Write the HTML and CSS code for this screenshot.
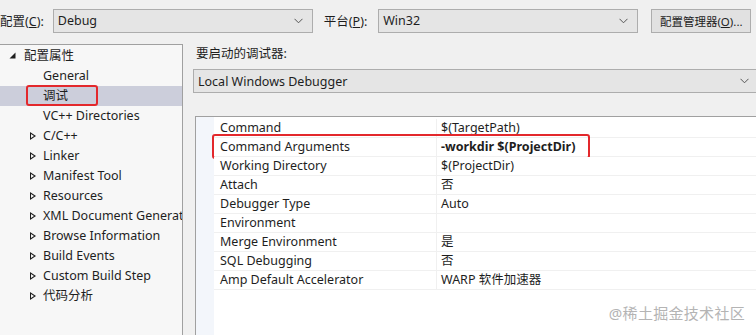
FILE: index.html
```html
<!DOCTYPE html>
<html lang="zh-CN">
<head>
    <meta charset="UTF-8">
    <title>调试 属性页</title>
    <link rel="stylesheet" href="styles.css">
</head>
<body>
    <div class="toolbar">
        <span class="label first">配置(<u>C</u>):</span>
        <div class="combo cfg">Debug<span class="chev"><svg width="9" height="6" viewBox="0 0 9 6"><path d="M0.5 0.8 L4.5 4.8 L8.5 0.8" fill="none" stroke="#555" stroke-width="1"/></svg></span></div>
        <span class="label">平台(<u>P</u>):</span>
        <div class="combo cfg">Win32<span class="chev"><svg width="9" height="6" viewBox="0 0 9 6"><path d="M0.5 0.8 L4.5 4.8 L8.5 0.8" fill="none" stroke="#555" stroke-width="1"/></svg></span></div>
        <button class="btn">配置管理器(<u>O</u>)...</button>
    </div>

    <div class="main">
        <div class="tree">
            <div class="node root"><span class="tri"><svg width="7" height="7" viewBox="0 0 7 7"><path d="M6.5 0.5 L6.5 6.5 L0.5 6.5 Z" fill="#1e1e1e"/></svg></span>配置属性</div>
            <div class="node leaf">General</div>
            <div class="node leaf selected"><span class="mark"></span>调试</div>
            <div class="node leaf">VC++ Directories</div>
            <div class="node">C/C++</div>
            <div class="node">Linker</div>
            <div class="node">Manifest Tool</div>
            <div class="node">Resources</div>
            <div class="node">XML Document Generator</div>
            <div class="node">Browse Information</div>
            <div class="node">Build Events</div>
            <div class="node">Custom Build Step</div>
            <div class="node">代码分析</div>
        </div>

        <div class="pane">
            <div class="caption">要启动的调试器:</div>
            <div class="combo wide">Local Windows Debugger<span class="chev"><svg width="9" height="6" viewBox="0 0 9 6"><path d="M0.5 0.8 L4.5 4.8 L8.5 0.8" fill="none" stroke="#555" stroke-width="1"/></svg></span></div>

            <div class="grid">
                <div class="row"><span class="name">Command</span><span class="value">$(TargetPath)</span></div>
                <div class="row"><span class="mark"></span><span class="name">Command Arguments</span><span class="value bold">-workdir $(ProjectDir)</span></div>
                <div class="row"><span class="name">Working Directory</span><span class="value">$(ProjectDir)</span></div>
                <div class="row"><span class="name">Attach</span><span class="value">否</span></div>
                <div class="row"><span class="name">Debugger Type</span><span class="value">Auto</span></div>
                <div class="row"><span class="name">Environment</span><span class="value"></span></div>
                <div class="row"><span class="name">Merge Environment</span><span class="value">是</span></div>
                <div class="row"><span class="name">SQL Debugging</span><span class="value">否</span></div>
                <div class="row"><span class="name">Amp Default Accelerator</span><span class="value">WARP 软件加速器</span></div>
            </div>
        </div>
    </div>

    <div class="watermark">@稀土掘金技术社区</div>
</body>
</html>
```

FILE: styles.css
```css
body {
    margin: 0;
    width: 756px;
    height: 335px;
    overflow: hidden;
    background: #f0f0f0;
    color: #1e1e1e;
    font-family: 'Noto Sans', 'Noto Sans CJK SC', sans-serif;
    font-size: 12.5px;
    position: relative;
}
.toolbar {
    height: 40px;
    display: flex;
    align-items: center;
    padding-top: 1px;
    box-sizing: border-box;
}
.label {
    margin: 0 11px 0 11px;
    white-space: nowrap;
}
.label.first {
    margin-left: 0;
    margin-right: 9px;
}
.combo {
    height: 24px;
    box-sizing: border-box;
    border: 1px solid #adadad;
    background: #e5e5e5;
    display: flex;
    align-items: center;
    padding-left: 4px;
    position: relative;
    white-space: nowrap;
}
.combo.cfg {
    width: 260px;
}
.chev {
    position: absolute;
    right: 9px;
    top: 8px;
    line-height: 0;
}
.btn {
    margin-left: 13px;
    height: 24px;
    width: 100px;
    border: 1px solid #adadad;
    background: #e1e1e1;
    font: inherit;
    font-size: 11.5px;
    color: inherit;
    padding: 0;
    white-space: nowrap;
}
.main {
    display: flex;
    margin-top: 4px;
}
.tree {
    width: 183px;
    height: 291px;
    box-sizing: border-box;
    border-top: 1px solid #a0a0a0;
    border-right: 1px solid #a0a0a0;
    background: #f7f7f7;
    padding-top: 1px;
    overflow: hidden;
}
.node {
    height: 20px;
    line-height: 20px;
    padding-left: 43px;
    white-space: nowrap;
    position: relative;
}
.node::before {
    content: "";
    position: absolute;
    left: 30px;
    top: 6px;
    width: 0;
    height: 0;
    border-left: 6px solid #1e1e1e;
    border-top: 4px solid transparent;
    border-bottom: 4px solid transparent;
}
.node::after {
    content: "";
    position: absolute;
    left: 31px;
    top: 8px;
    width: 0;
    height: 0;
    border-left: 3px solid #f7f7f7;
    border-top: 2px solid transparent;
    border-bottom: 2px solid transparent;
}
.node.leaf::before,
.node.leaf::after,
.node.root::before,
.node.root::after {
    display: none;
}
.node.root {
    padding-left: 24px;
}
.tri {
    position: absolute;
    left: 9px;
    top: 6px;
    line-height: 0;
}
.node.selected {
    background: #cccedb;
}
.tree .mark {
    position: absolute;
    left: 26px;
    top: -1px;
    width: 72px;
    height: 21px;
    box-sizing: border-box;
    border: 2px solid #e3282c;
    border-radius: 3px;
}
.pane {
    flex: 1;
    padding-left: 10px;
    overflow: hidden;
}
.caption {
    height: 22px;
    line-height: 22px;
    padding-left: 3px;
    margin-top: -1px;
}
.combo.wide {
    margin-top: 4px;
    width: 570px;
}
.combo.wide .chev {
    right: 13px;
}
.grid {
    margin-top: 23px;
    margin-left: 2px;
    width: 580px;
    height: 230px;
    border-top: 1px solid #a0a0a0;
    border-left: 1px solid #a0a0a0;
    background: linear-gradient(to right, #f3f6fb 18px, #fff 18px);
    padding-top: 2px;
}
.row {
    display: flex;
    height: 19px;
    line-height: 18px;
    margin-left: 18px;
    background: #fff;
    border-bottom: 1px solid #f0f0f0;
    box-sizing: border-box;
    position: relative;
}
.name {
    width: 216px;
    padding-left: 6px;
    border-right: 1px solid #f0f0f0;
    white-space: nowrap;
}
.value {
    padding-left: 4px;
    white-space: nowrap;
}
.bold {
    font-weight: bold;
}
.grid .mark {
    position: absolute;
    left: -2px;
    top: -4px;
    width: 378px;
    height: 25px;
    box-sizing: border-box;
    border: 2px solid #e3282c;
    border-radius: 3px;
}
.watermark {
    position: absolute;
    right: 11px;
    bottom: 12px;
    color: #b4b4b4;
    font-size: 15px;
    letter-spacing: 0.3px;
}
```
